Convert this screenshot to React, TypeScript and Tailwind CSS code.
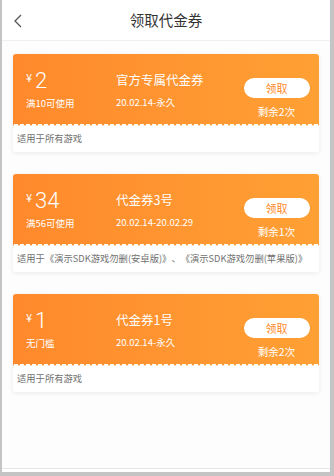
import React from 'react';

interface Coupon {
  amount: string;
  condition: string;
  title: string;
  period: string;
  remaining: string;
  scope: string;
}

const coupons: Coupon[] = [
  {
    amount: '2',
    condition: '满10可使用',
    title: '官方专属代金券',
    period: '20.02.14-永久',
    remaining: '剩余2次',
    scope: '适用于所有游戏',
  },
  {
    amount: '34',
    condition: '满56可使用',
    title: '代金券3号',
    period: '20.02.14-20.02.29',
    remaining: '剩余1次',
    scope: '适用于《演示SDK游戏勿删(安卓版)》、《演示SDK游戏勿删(苹果版)》',
  },
  {
    amount: '1',
    condition: '无门槛',
    title: '代金券1号',
    period: '20.02.14-永久',
    remaining: '剩余2次',
    scope: '适用于所有游戏',
  },
];

const CouponCard: React.FC<{ coupon: Coupon }> = ({ coupon }) => (
  <div className="overflow-hidden rounded-[3px] bg-white shadow-[0_1px_5px_rgba(0,0,0,0.08)]">
    <div className="relative flex h-[72px] bg-gradient-to-r from-[#ff892c] to-[#ffa034] pl-[13px] pr-[9px] text-white">
      {/* amount */}
      <div className="flex w-[90px] flex-col pt-[16px]">
        <div className="flex items-start">
          <span className="mt-[2px] text-[11px] leading-none">¥</span>
          <span className="ml-[3px] font-['Roboto',sans-serif] text-[22px] font-light leading-[22px]">
            {coupon.amount}
          </span>
        </div>
        <span className="mt-[5px] text-[9.5px] leading-[12px]">{coupon.condition}</span>
      </div>

      {/* title + period */}
      <div className="flex flex-1 flex-col pt-[18px]">
        <span className="text-[12.5px] leading-[16px]">{coupon.title}</span>
        <span className="mt-[8px] text-[9.5px] leading-[12px]">{coupon.period}</span>
      </div>

      {/* action */}
      <div className="flex w-[67px] flex-col items-center pt-[24px]">
        <button className="flex h-[20px] w-[66px] items-center justify-center rounded-full bg-white text-[11px] text-[#ff8a2c]">
          领取
        </button>
        <span className="mt-[7px] text-[10.5px] leading-[14px]">{coupon.remaining}</span>
      </div>

      {/* scalloped edge */}
      <div className="absolute bottom-0 left-0 right-0 h-[3px] bg-[radial-gradient(circle_at_3px_3.5px,#fff_2.5px,transparent_3px)] bg-[length:6px_3px] bg-repeat-x" />
    </div>
    <div className="flex h-[26px] items-center whitespace-nowrap pl-[4px] text-[9.3px] text-[#707070] [text-spacing-trim:space-all]">
      {coupon.scope}
    </div>
  </div>
);

const App: React.FC = () => {
  return (
    <div className="h-[476px] w-[334px] bg-[#c4c4c4] pl-[2px] font-['Noto_Sans_CJK_SC','Noto_Sans',sans-serif]">
      <div className="flex h-[472px] w-[328px] flex-col bg-white">
        <div className="relative flex h-[41px] shrink-0 items-center justify-center border-b border-[#f0f0f0]">
          <svg
            className="absolute left-[11px] top-[14px]"
            width="10"
            height="14"
            viewBox="0 0 10 14"
            fill="none"
          >
            <polyline points="8,1 2,7 8,13" stroke="#555" strokeWidth="1.3" />
          </svg>
          <h1 className="text-[14.5px] leading-none text-[#333]">领取代金券</h1>
        </div>

        <div className="flex flex-1 flex-col gap-[22px] bg-[#fdfdfd] px-[11px] pt-[13px]">
          {coupons.map((c, i) => (
            <CouponCard key={i} coupon={c} />
          ))}
        </div>
        <div className="h-[4px] shrink-0 border-t border-[#e6e6e6] bg-white" />
      </div>
    </div>
  );
};

export default App;
